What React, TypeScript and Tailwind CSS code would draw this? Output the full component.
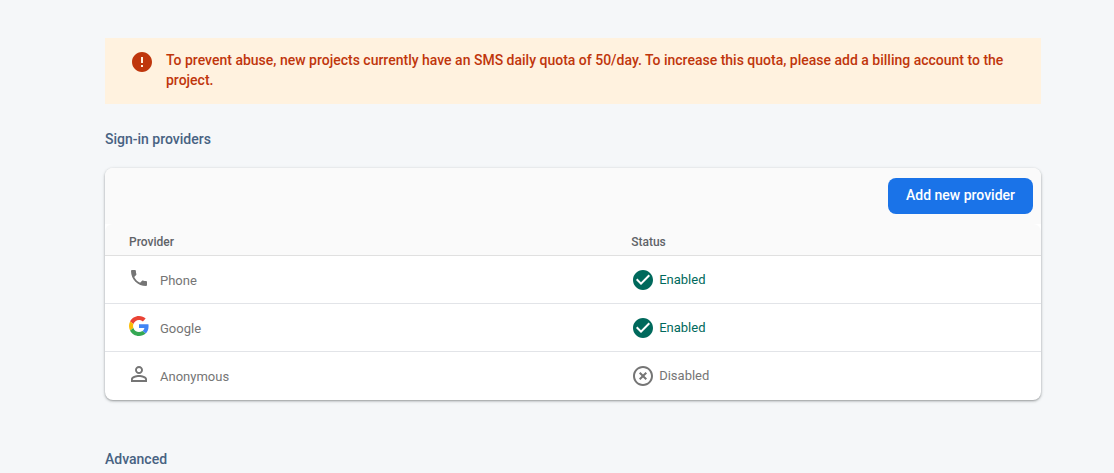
import type { ReactNode } from 'react';

type Provider = { name: string; icon: ReactNode; enabled: boolean };

function ErrorIcon() {
  return (
    <svg className="size-6 shrink-0" viewBox="0 0 24 24" fill="currentColor" aria-hidden="true">
      <path d="M12 2C6.48 2 2 6.48 2 12s4.48 10 10 10 10-4.48 10-10S17.52 2 12 2zm1 15h-2v-2h2v2zm0-4h-2V7h2v6z" />
    </svg>
  );
}

function PhoneIcon() {
  return (
    <svg className="size-4" viewBox="3 3 18 18" fill="currentColor" aria-hidden="true">
      <path d="M6.62 10.79c1.44 2.83 3.76 5.14 6.59 6.59l2.2-2.2c.27-.27.67-.36 1.02-.24 1.12.37 2.33.57 3.57.57.55 0 1 .45 1 1V20c0 .55-.45 1-1 1-9.39 0-17-7.61-17-17 0-.55.45-1 1-1h3.5c.55 0 1 .45 1 1 0 1.25.2 2.45.57 3.57.11.35.03.74-.25 1.02l-2.2 2.2z" />
    </svg>
  );
}

function GoogleIcon() {
  return (
    <svg className="size-5" viewBox="0 0 48 48" aria-hidden="true">
      <path fill="#EA4335" d="M24 9.5c3.54 0 6.71 1.22 9.21 3.6l6.85-6.85C35.9 2.38 30.47 0 24 0 14.62 0 6.51 5.38 2.56 13.22l7.98 6.19C12.43 13.72 17.74 9.5 24 9.5z" />
      <path fill="#4285F4" d="M46.98 24.55c0-1.57-.15-3.09-.38-4.55H24v9.02h12.94c-.58 2.96-2.26 5.48-4.78 7.18l7.73 6c4.51-4.18 7.09-10.36 7.09-17.65z" />
      <path fill="#FBBC05" d="M10.53 28.59c-.48-1.45-.76-2.99-.76-4.59s.27-3.14.76-4.59l-7.98-6.19C.92 16.46 0 20.12 0 24c0 3.88.92 7.54 2.56 10.78l7.97-6.19z" />
      <path fill="#34A853" d="M24 48c6.48 0 11.93-2.13 15.89-5.81l-7.73-6c-2.15 1.45-4.92 2.3-8.16 2.3-6.26 0-11.57-4.22-13.47-9.91l-7.98 6.19C6.51 42.62 14.62 48 24 48z" />
    </svg>
  );
}

function PersonIcon() {
  return (
    <svg className="size-4" viewBox="4 4 16 16" fill="currentColor" aria-hidden="true">
      <path d="M12 5.9c1.16 0 2.1.94 2.1 2.1s-.94 2.1-2.1 2.1S9.9 9.16 9.9 8s.94-2.1 2.1-2.1m0 9c2.97 0 6.1 1.46 6.1 2.1v1.1H5.9V17c0-.64 3.13-2.1 6.1-2.1M12 4C9.79 4 8 5.79 8 8s1.79 4 4 4 4-1.79 4-4-1.79-4-4-4zm0 9c-2.67 0-8 1.34-8 4v3h16v-3c0-2.66-5.33-4-8-4z" />
    </svg>
  );
}

function CheckCircleIcon() {
  return (
    <svg className="size-6" viewBox="0 0 24 24" fill="currentColor" aria-hidden="true">
      <path d="M12 2C6.48 2 2 6.48 2 12s4.48 10 10 10 10-4.48 10-10S17.52 2 12 2zm-2 15l-5-5 1.41-1.41L10 14.17l7.59-7.59L19 8l-9 9z" />
    </svg>
  );
}

function CrossCircleIcon() {
  return (
    <svg className="size-6" viewBox="0 0 24 24" fill="currentColor" aria-hidden="true">
      <path d="M14.59 8L12 10.59 9.41 8 8 9.41 10.59 12 8 14.59 9.41 16 12 13.41 14.59 16 16 14.59 13.41 12 16 9.41 14.59 8zM12 2C6.47 2 2 6.47 2 12s4.47 10 10 10 10-4.47 10-10S17.53 2 12 2zm0 18c-4.41 0-8-3.59-8-8s3.59-8 8-8 8 3.59 8 8-3.59 8-8 8z" />
    </svg>
  );
}

const providers: Provider[] = [
  { name: 'Phone', icon: <PhoneIcon />, enabled: true },
  { name: 'Google', icon: <GoogleIcon />, enabled: true },
  { name: 'Anonymous', icon: <PersonIcon />, enabled: false },
];

function Status({ enabled }: { enabled: boolean }) {
  return (
    <span className={enabled ? 'flex items-center gap-1 text-[#00695c]' : 'flex items-center gap-1 text-[#757575]'}>
      {enabled ? <CheckCircleIcon /> : <CrossCircleIcon />}
      {enabled ? 'Enabled' : 'Disabled'}
    </span>
  );
}

export default function App() {
  return (
    <main className="min-h-screen bg-[#f5f7f9] pt-[38px] pr-[73px] pl-[105px] font-[Roboto,sans-serif] text-sm">
      <div role="alert" className="flex gap-3 bg-[#fff2df] pt-3 pr-6 pb-3.5 pl-[25px] leading-5 font-medium text-[#bf360c]">
        <ErrorIcon />
        <p>
          To prevent abuse, new projects currently have an SMS daily quota of 50/day. To increase this quota, please add
          a billing account to the project.
        </p>
      </div>

      <h2 className="mt-[25px] leading-5 font-medium text-[#476282]">Sign-in providers</h2>

      <section className="mt-[19px] overflow-hidden rounded-lg bg-white shadow-[0_1px_2px_rgba(60,64,67,0.4),0_1px_3px_1px_rgba(60,64,67,0.12)]">
        <div className="flex h-14 items-center justify-end bg-[#fafafa] px-2">
          <button type="button" className="h-9 rounded-lg bg-[#1a73e8] px-[18px] pb-0.5 font-medium text-white">
            Add new provider
          </button>
        </div>
        <table className="w-full table-fixed border-separate border-spacing-0 text-left text-[13px] leading-5">
          <thead className="text-xs text-[#5f6368]">
            <tr className="h-8">
              <th className="w-[56%] rounded-tl-lg border-b border-[#e0e0e0] bg-[#fafafa] pt-1 pl-6 font-medium">
                Provider
              </th>
              <th className="rounded-tr-lg border-b border-[#e0e0e0] bg-[#fafafa] pt-1 pl-0.5 font-medium">Status</th>
            </tr>
          </thead>
          <tbody className="text-[#757575] [&_td]:border-b [&_td]:border-[#e2e4e8] [&_td]:pt-px [&>tr:last-child>td]:border-transparent">
            {providers.map((provider) => (
              <tr key={provider.name} className="h-12">
                <td className="pl-6">
                  <span className="flex items-center gap-[11px]">
                    <span className="flex h-6 w-5 items-center justify-center pb-1">{provider.icon}</span>
                    <span className="pt-0.5">{provider.name}</span>
                  </span>
                </td>
                <td className="pl-0.5">
                  <Status enabled={provider.enabled} />
                </td>
              </tr>
            ))}
          </tbody>
        </table>
      </section>

      <h2 className="mt-[49px] leading-5 font-medium text-[#476282]">Advanced</h2>
    </main>
  );
}
